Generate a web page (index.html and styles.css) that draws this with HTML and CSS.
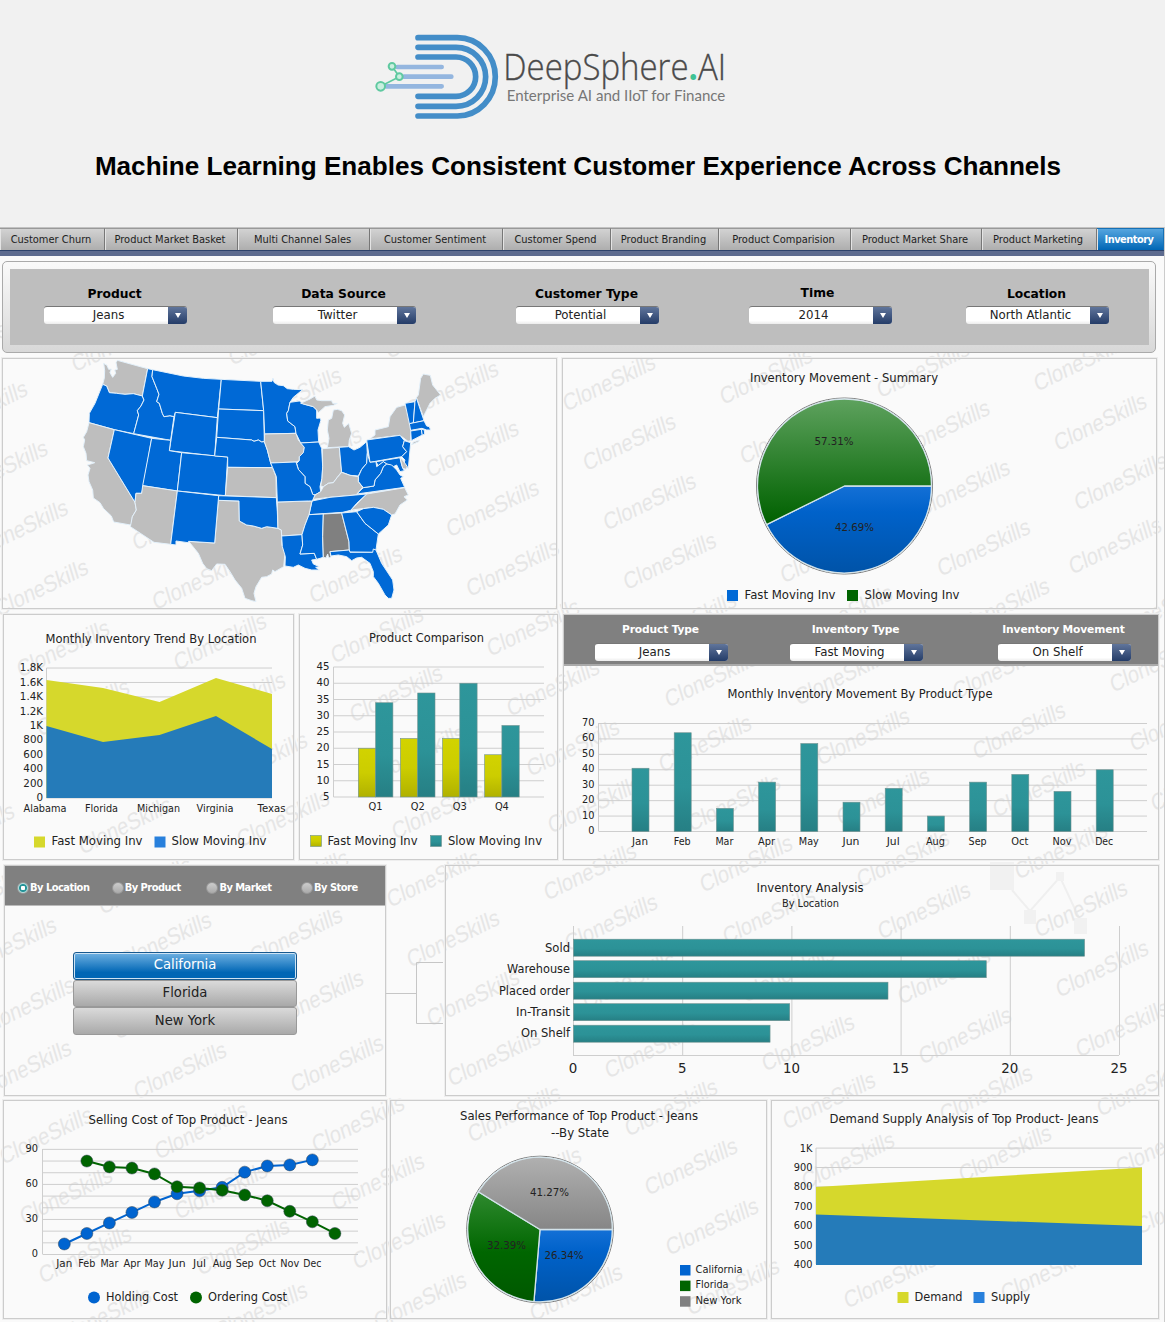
FILE: index.html
```html
<!DOCTYPE html>
<html lang="en">
<head>
<meta charset="utf-8">
<title>DeepSphere.AI - Inventory</title>
<link rel="stylesheet" href="styles.css">
</head>
<body>
<header class="masthead">
  <svg class="logo" viewBox="0 0 1140 360" role="img" aria-label="DeepSphere.AI">
    <g class="logo-arcs">
      <path d="M174 53H292A114 117.500 0 0 1 292 288H174"/>
      <path d="M174 82H288A89 88.500 0 0 1 288 259H174"/>
      <path d="M174 111H288A59 59 0 0 1 288 229H174"/>
    </g>
    <g class="logo-lines"><path d="M112 141H245M132 170H274M78 199H245"/></g>
    <path class="logo-link" d="M96 139L118 170L62 199"/>
    <g class="logo-nodes"><circle cx="96" cy="139" r="10"/><circle cx="118" cy="170" r="10"/><circle cx="62" cy="199" r="13"/></g>
    <text class="logo-name" x="430" y="180" textLength="668" lengthAdjust="spacingAndGlyphs">DeepSphere<tspan class="logo-dot">.</tspan>AI</text>
    <text class="logo-tag" x="440" y="244" textLength="656" lengthAdjust="spacingAndGlyphs">Enterprise AI and IIoT for Finance</text>
  </svg>
  <h1>Machine Learning Enables Consistent Customer Experience Across Channels</h1>
</header>
<div class="dash">
  <svg class="marks" id="marks" width="1165" height="1095" viewBox="0 227 1165 1095" aria-hidden="true"></svg>
  <nav class="tabs">
    <a>Customer Churn</a><a>Product Market Basket</a><a>Multi Channel Sales</a><a>Customer Sentiment</a><a>Customer Spend</a><a>Product Branding</a><a>Product Comparision</a><a>Product Market Share</a><a>Product Marketing</a><a class="on">Inventory</a>
  </nav>
  <section class="filters">
    <div class="filter"><b>Product</b><div class="select"><span>Jeans</span><i></i></div></div>
    <div class="filter"><b>Data Source</b><div class="select"><span>Twitter</span><i></i></div></div>
    <div class="filter"><b>Customer Type</b><div class="select"><span>Potential</span><i></i></div></div>
    <div class="filter time"><b>Time</b><div class="select"><span>2014</span><i></i></div></div>
    <div class="filter"><b>Location</b><div class="select"><span>North Atlantic</span><i></i></div></div>
  </section>
  <div class="row row-map">
    <section class="panel"><svg id="map" viewBox="3 359 553 249"></svg></section>
    <section class="panel"><svg id="summary" viewBox="563 359 593 249"></svg></section>
  </div>
  <div class="row row-mid">
    <section class="panel"><svg id="trend" viewBox="4 615 289 244"></svg></section>
    <section class="panel"><svg id="compare" viewBox="300 615 257 244"></svg></section>
    <section class="panel">
      <div class="subfilters">
        <div class="filter"><b>Product Type</b><div class="select"><span>Jeans</span><i></i></div></div>
        <div class="filter"><b>Inventory Type</b><div class="select"><span>Fast Moving</span><i></i></div></div>
        <div class="filter"><b>Inventory Movement</b><div class="select"><span>On Shelf</span><i></i></div></div>
      </div>
      <svg id="monthly" viewBox="564 666 594 193"></svg>
    </section>
  </div>
  <div class="row row-loc">
    <section class="panel picker">
      <div class="radios"><label class="on"><i></i>By Location</label><label><i></i>By Product</label><label><i></i>By Market</label><label><i></i>By Store</label></div>
      <div class="choices"><button class="on">California</button><button>Florida</button><button>New York</button></div>
    </section>
    <svg class="connector" viewBox="386 865 59 231"><path d="M386 993.500H416.500M443 962.500H416.500V1023.500H443"/></svg>
    <section class="panel"><svg id="analysis" viewBox="446 866 712 229"></svg></section>
  </div>
  <div class="row row-end">
    <section class="panel"><svg id="selling" viewBox="4 1101 382 217"></svg></section>
    <section class="panel"><svg id="sales" viewBox="391 1101 375 217"></svg></section>
    <section class="panel"><svg id="demand" viewBox="772 1101 386 217"></svg></section>
  </div>
</div>
<svg class="defs" width="0" height="0">
  <defs>
    <linearGradient id="gGreen" x1="0" y1="0" x2="0" y2="1"><stop offset="0" stop-color="#5ea25e"/><stop offset=".75" stop-color="#157015"/><stop offset="1" stop-color="#006000"/></linearGradient>
    <linearGradient id="gGreen2" x1="0" y1="0" x2="0" y2="1"><stop offset="0" stop-color="#2f8a2f"/><stop offset=".55" stop-color="#006600"/><stop offset="1" stop-color="#005800"/></linearGradient>
    <linearGradient id="gBlue" x1="0" y1="0" x2="0" y2="1"><stop offset="0" stop-color="#1470d6"/><stop offset=".3" stop-color="#0062ca"/><stop offset="1" stop-color="#0053a8"/></linearGradient>
    <linearGradient id="gGray" x1="0" y1="0" x2="0" y2="1"><stop offset="0" stop-color="#b0b0b0"/><stop offset="1" stop-color="#868686"/></linearGradient>
    <linearGradient id="gTeal" x1="0" y1="0" x2="0" y2="1"><stop offset="0" stop-color="#2e969b"/><stop offset=".55" stop-color="#2c9297"/><stop offset="1" stop-color="#267f84"/></linearGradient>
    <linearGradient id="gYellow" x1="0" y1="0" x2="0" y2="1"><stop offset="0" stop-color="#d2d300"/><stop offset=".5" stop-color="#cccd00"/><stop offset="1" stop-color="#b0b100"/></linearGradient>
  </defs>
</svg>
<script src="charts.js"></script>
</body>
</html>
```
FILE: styles.css
```css
* { box-sizing: border-box; }
body { margin: 0; background: #fafafa; font-family: "DejaVu Sans", Verdana, sans-serif; color: #222; }
.masthead { height: 227px; background: #f1f1f1; display: flex; flex-direction: column; align-items: center; padding-top: 20px; }
.logo { width: 380px; height: 120px; margin-right: 65px; }
.logo-arcs path { fill: none; stroke: #438dc8; stroke-width: 17; stroke-linecap: round; }
.logo-lines path { fill: none; stroke: #94b6df; stroke-width: 14; stroke-linecap: round; }
.logo-link { fill: none; stroke: #5fc9a0; stroke-width: 5; }
.logo-nodes circle { fill: #c9efdf; stroke: #5fc9a0; stroke-width: 6; }
.logo-name { font: 300 108px "Open Sans", sans-serif; fill: #4a4a4a; stroke: #4a4a4a; stroke-width: 1; }
.logo-dot { fill: #3fc294; stroke: none; font-weight: 700; }
.logo-tag { font: 400 45px Lato, sans-serif; fill: #777; }
h1 { margin: 10px 9px 0 0; font: bold 26.100px/32px "Liberation Sans", Arial, sans-serif; color: #000; white-space: nowrap; }

.dash { position: relative; height: 1095px; border-right: 1px solid #ccc; }
.marks { position: absolute; left: 0; top: 0; z-index: -1; }
.marks text { font: 23px "Liberation Sans", Arial, sans-serif; fill: #e6e6e6; }
.marks .deco { fill: #f1f1f1; }
.marks .deco-line { fill: none; stroke: #efefef; stroke-width: 2; }

.tabs { height: 29px; display: grid; grid-template-columns: 105px 133px 132px 133px 108px 108px 132px 131px 115px 67px; border-top: 1px solid #c2c2c2; border-bottom: 5px solid #5d6b8f; box-shadow: inset 0 -2px #2d426b; background: #ccc; }
.tabs a { height: 22px; display: flex; align-items: center; justify-content: center; border-right: 1px solid #777; border-top: 1px solid #999; box-shadow: inset 1px 0 #e4e4e4; background: linear-gradient(#d2d2d2, #aeaeae); font-size: 9.900px; white-space: nowrap; color: #222; padding-right: 2px; }
.tabs a.on { background: linear-gradient(#55a5df, #0066b5); color: #fff; font-weight: bold; font-size: 9.800px; border-color: #1670b5; padding: 0 2px 0 0; letter-spacing: -.5px; }

.filters { margin: 5px 0 0 2px; width: 1154px; height: 92px; border: 1px solid #aaa; border-radius: 5px; padding: 32px 0 0 41px; display: flex; align-items: flex-start; background: linear-gradient(#bebebe, #bebebe) 7px 7px / 1139px 76px no-repeat, linear-gradient(#fafafa, #d8d8d8); }
.filters .filter { width: 143px; }
.filters .filter:nth-child(2) { margin-left: 86px; }
.filters .filter:nth-child(3) { margin-left: 100px; }
.filters .filter:nth-child(4) { margin-left: 90px; }
.filters .filter:nth-child(5) { margin-left: 74px; }
.filter { display: flex; flex-direction: column; }
.filter b { height: 12px; line-height: 1px; text-align: center; white-space: nowrap; font-size: 12.300px; color: #000; padding-right: 2px; }
.filter.time b { position: relative; top: -1px; left: -2px; }
.select { height: 18px; display: flex; border-radius: 3px; overflow: hidden; border-top: 1px solid #777; background: linear-gradient(#fff 80%, #ececec); }
.select span { flex: 1; text-align: center; font-size: 11.800px; line-height: 16px; padding-left: 5px; }
.select i { width: 19px; background: linear-gradient(#60759b, #243c68); display: flex; align-items: center; justify-content: center; }
.select i::after { content: ""; border: 3px solid transparent; border-top: 5px solid #fff; border-bottom: 0; }

.row { display: grid; }
.panel { border: 1px solid #ccc; box-shadow: 0 0 0 1px #eee; display: flex; flex-direction: column; overflow: hidden; }
.panel > svg { display: block; width: 100%; flex: 1; min-height: 0; }
.row-map { margin: 5px 0 0 2px; height: 251px; grid-template-columns: 555px 595px; column-gap: 5px; }
.row-mid { margin: 5px 0 0 3px; height: 246px; grid-template-columns: 291px 259px 596px; column-gap: 5px; }
.row-loc { margin: 5px 0 0 4px; height: 231px; grid-template-columns: 382px 59px 714px; }
.row-end { margin: 4px 0 0 3px; height: 219px; grid-template-columns: 384px 377px 388px; column-gap: 3px; }
.row-end .panel:last-child { margin-left: 1px; margin-right: -1px; }

.subfilters { height: 51px; flex: none; background: #808080; border-bottom: 2px solid #aaa; display: flex; padding: 15px 0 0 31px; gap: 62px; }
.subfilters .filter { width: 133px; }
.subfilters .filter:nth-child(3) { margin-left: 13px; }
.subfilters b { color: #fff; font-size: 10.700px; letter-spacing: -.15px; height: 13px; line-height: 0; }

.radios { height: 40px; background: #808080; border-bottom: 1px solid #bbb; display: flex; align-items: center; padding: 4px 0 0 12px; }
.radios label { flex: none; width: 94.700px; display: flex; align-items: center; gap: 1px; color: #fff; font-weight: bold; font-size: 9.900px; letter-spacing: -.5px; white-space: nowrap; }
.radios i { width: 12px; height: 12px; border-radius: 50%; background: linear-gradient(#ccc, #aaa); border: 1px solid #989898; }
.radios .on i { background: radial-gradient(circle, #fff 0 2px, #249297 2.500px 3.500px, #b5dfdf 4.500px); }
.choices { margin: 46px 0 0 68px; width: 224px; display: flex; flex-direction: column; }
.choices button { height: 27.700px; border: 1px solid #999; border-radius: 3px; background: linear-gradient(#dadada, #a9a9a9); font: 13.200px "DejaVu Sans", sans-serif; color: #222; padding: 0 0 2px; }
.choices button.on { background: linear-gradient(#6fb1e2, #0066b5 75%); color: #fff; border-color: #17598f; box-shadow: inset 0 0 0 1px #cde3f4; }
.connector { width: 59px; height: 231px; }
.connector path { fill: none; stroke: #c6c6c6; }

svg { font-family: "DejaVu Sans", Verdana, sans-serif; }
svg text { fill: #222; }
.grid { stroke: #cecece; fill: none; }
.states path { stroke: #e4f1fb; stroke-width: 3; stroke-linejoin: round; fill: #0069d6; }
.states .g { fill: #bebebe; }
.states .d { fill: #808080; }
.slice { stroke: #d3e3ea; stroke-width: 1.300; }
.rim { fill: none; stroke: #777; }
.bar { stroke: #6f9290; stroke-width: .600; }
.defs { position: absolute; }
```
FILE: charts.js
```js
const NS = 'http://www.w3.org/2000/svg';
const get = id => document.getElementById(id);

function add(parent, tag, attrs, text) {
  const node = document.createElementNS(NS, tag);
  for (const k in attrs) node.setAttribute(k, attrs[k]);
  if (text !== undefined) node.textContent = text;
  parent.appendChild(node);
  return node;
}
// y is the vertical centre of the label; w, when given, fixes its drawn width
function label(p, x, y, s, size, anchor, w) {
  const a = { x, y: y + size * 0.36, 'font-size': size, 'text-anchor': anchor || 'middle' };
  if (w) { a.textLength = w; a.lengthAdjust = 'spacingAndGlyphs'; }
  return add(p, 'text', a, s);
}
const line = (p, x1, y1, x2, y2) => add(p, 'path', { class: 'grid', d: `M${x1} ${y1}L${x2} ${y2}` });
const rect = (p, x, y, width, height, fill, cls) => add(p, 'rect', { x, y, width, height, fill, class: cls || '' });
const poly = (p, pts, fill) => add(p, 'polygon', { points: pts.join(' '), fill });

// Background word marks, by the left end of each baseline
const marks = [];
for (let j = -1; j < 4; j++)
  for (let i = -4; i < 4; i++)
    if (!(j === 3 && i === 3)) marks.push([566 + 157 * i + 20.2 * j, 412 - 6.7 * i + 59.5 * j]);
marks.push([1072, 575]);
[[20,678],[177,671],[334,664],[490,657],[647,650],[803,643],[960,636],[1116,640],[40,737],[196,730],[353,723],[510,717],[668,708],[798,706],[956,700],[1113,693],
 [-95,803],[60,797],[218,790],[375,783],[530,777],[662,773],[820,766],[976,760],[1133,752],[-75,861],[82,855],[240,848],[395,840],[551,834],[691,832],[840,826],[996,818],[1154,812],
 [-55,922],[102,915],[259,908],[390,908],[547,901],[703,893],[860,888],[1018,880],[-33,975],[122,970],[253,965],[410,968],[568,952],[726,945],[881,940],[1038,938],
 [-15,1035],[117,1040],[274,1028],[430,1027],[586,1010],[745,1003],[901,1005],[1059,998],[-18,1098],[137,1100],[294,1093],[451,1087],[608,1079],[765,1072],[922,1065],[1079,1058],
 [3,1165],[158,1160],[315,1153],[471,1143],[628,1137],[786,1130],[943,1123],[1100,1117],[23,1225],[178,1220],[335,1211],[492,1205],[648,1196],[805,1190],[962,1183],[1119,1176],
 [42,1284],[200,1276],[356,1270],[512,1262],[669,1256],[825,1249],[982,1242],[1139,1235],[62,1345],[218,1340],[377,1330],[533,1322],[690,1316],[847,1309],[1004,1302]
].forEach(m => marks.push(m));
const bg = get('marks');
add(bg, 'path', { class: 'deco-line', d: 'M1012 890L1030 911L1060 877L1080 920' });
add(bg, 'path', { class: 'deco', d: 'M990 862h24v28h-24zM1024 910h12v14h-12zM1056 872h8v9h-8zM1074 918h13v16h-13z' });
marks.forEach(([x, y]) => add(bg, 'text', { transform: `translate(${x} ${y}) rotate(-26) skewX(-9)`, textLength: 101, lengthAdjust: 'spacingAndGlyphs' }, 'CloneSkills'));

// State outlines, three units to the pixel
const west = [
 ['g','101,40 111,46 116,58 124,57 120,68 128,82 137,70 134,60 142,58 138,38 142,31 233,56 217,138 190,131 165,133 140,130 118,128 110,108 98,103 103,84 104,62'],
 ['','98,103 110,108 118,128 140,130 165,133 190,131 217,138 222,150 213,168 202,182 206,195 191,251 133,239 57,218 58,190 75,160'],
 ['g','57,218 133,239 114,324 195,457 199,480 187,500 185,520 181,525 131,516 124,498 100,475 90,458 70,444 68,420 57,395 54,375 60,355 52,345 62,342 74,338 50,332 48,310 40,290 44,270 40,262 50,245'],
 ['','133,239 245,265 221,405 215,430 198,430 195,457 114,324'],
 ['','233,56 248,59 246,80 260,115 267,133 260,155 268,160 277,190 282,200 300,197 312,200 302,271 191,251 206,195 202,182 213,168 222,150 217,138'],
 ['','248,59 340,78 400,85 454,88 442,203 316,187 312,200 300,197 282,200 277,190 268,160 260,155 267,133 260,115 246,80'],
 ['','316,187 442,203 434,318 298,302'],
 ['','245,265 302,271 298,302 335,308 322,423 218,407'],
 ['','335,308 473,321 466,437 322,423'],
 ['g','218,407 322,423 302,583 252,577 181,530 187,500 199,480 195,457 198,430 215,430'],
 ['','454,88 572,94 581,182 446,177'],
 ['','446,177 581,182 583,275 575,276 565,270 552,274 545,270 440,262'],
 ['','440,262 545,270 552,274 565,270 575,276 583,275 592,300 602,339 608,353 473,352 473,321 434,318'],
 ['g','473,352 608,353 618,380 619,443 466,437'],
 ['g','445,451 507,453 508,513 530,525 550,528 575,535 590,530 624,535 634,540 636,585 645,610 641,650 615,665 608,660 605,672 590,680 575,682 558,710 552,730 558,755 545,752 525,745 515,715 495,690 480,665 465,643 440,642 425,662 410,656 398,640 385,610 356,574 434,579'],
 ['','446,437 619,443 622,485 624,535 590,530 575,535 550,528 530,525 508,513 507,453 445,451'],
 ['','322,423 446,437 434,579 356,574 354,578 318,573 318,585 302,583']
];
const east = [
 ['','32,94 66,94 69,85 72,97 84,105 100,107 112,116 130,118 158,119 130,142 120,157 115,182 110,190 113,213 135,230 138,250 44,252 41,182'],
 ['g','44,252 138,250 145,270 163,292 160,308 148,320 148,332 138,336 62,339 52,300 43,275'],
 ['','120,157 148,153 160,162 190,170 200,180 200,205 210,204 213,210 204,240 206,276 152,279 138,250 135,230 113,213 110,190 115,182'],
 ['g','152,160 180,147 195,138 200,150 215,152 245,152 248,160 262,160 250,166 225,170 205,188 200,180 190,170 160,162'],
 ['g','232,293 237,265 232,240 235,210 245,205 250,180 262,178 275,182 284,195 278,220 283,232 296,220 302,240 305,250 298,270 296,290'],
 ['','152,279 206,276 215,295 218,350 216,385 210,410 212,425 195,435 188,433 180,410 165,400 165,380 145,358 140,340 148,332 148,320 160,308 163,292'],
 ['g','217,296 268,292 275,365 262,382 250,398 235,400 220,410 212,408 216,385 218,350'],
 ['','268,292 296,290 312,300 330,292 350,275 352,310 350,340 335,358 325,378 300,376 285,370 275,367'],
 ['g','358,268 375,255 375,240 415,230 420,200 440,172 465,165 483,218 482,272 474,274 450,256 365,266'],
 ['','350,270 450,256 463,272 458,290 470,305 455,320 360,337'],
 ['','465,160 495,155 490,219 478,221'],
 ['g','499,143 505,135 512,85 520,72 530,74 541,76 548,105 560,120 572,135 555,145 540,160 535,170 520,200'],
 ['','495,155 499,143 522,212 490,219'],
 ['','478,221 522,212 530,228 538,230 542,240 530,240 516,235 482,241'],
 ['','482,243 514,238 517,255 484,272'],
 ['','514,238 523,240 524,252 517,256'],
 ['g','485,284 490,276 508,270 506,275'],
 ['','463,272 482,278 480,300 475,355 460,345 465,330 455,320 470,305 458,290'],
 ['','378,335 450,323 455,345 463,362 450,365 440,345 430,350 410,342 400,335 385,348'],
 ['g','450,323 458,330 472,350 468,358 458,355'],
 ['','320,432 340,413 372,408 375,390 392,370 400,350 410,342 425,345 440,360 450,375 460,380 452,385 464,412'],
 ['','352,310 360,337 378,335 380,350 400,335 410,342 400,350 392,370 375,390 372,408 340,413 325,395 325,380 335,358 350,340'],
 ['g','350,432 464,413 475,435 462,440 472,450 450,465 435,492 425,495 400,478 370,472 320,478 302,481'],
 ['g','188,448 195,435 212,425 220,410 235,400 250,398 262,382 275,367 300,376 325,380 325,395 338,412 318,435 240,442'],
 ['','186,453 240,442 350,432 320,460 302,481 278,487 177,494'],
 ['g','82,456 186,453 177,494 165,525 156,554 95,558 94,540 84,535'],
 ['','62,339 138,336 145,358 165,380 165,400 180,410 188,433 195,435 187,453 175,453 82,456 79,380 68,353'],
 ['','95,558 156,554 158,585 150,612 193,610 200,628 185,630 190,642 208,650 197,652 208,660 185,660 165,655 145,645 130,652 105,648 106,620 97,590'],
 ['','177,494 220,492 218,560 220,622 200,628 193,610 150,612 158,585 156,554 165,525'],
 ['d','220,492 275,489 297,575 298,600 240,605 243,622 236,624 233,612 228,624 220,622 218,560'],
 ['','275,489 320,485 345,520 385,552 378,600 368,607 298,606 297,575'],
 ['','320,485 340,476 370,472 400,478 425,495 415,525 385,552 345,520'],
 ['','240,605 298,600 300,607 368,607 370,597 378,600 395,640 428,690 432,720 425,745 415,745 405,735 385,700 370,680 370,665 360,640 335,622 320,624 305,632 290,620 265,615 243,618']
];
const map = get('map');
[[west, 70], [east, 250]].forEach(([list, dx]) => {
  const g = add(map, 'g', { class: 'states', transform: `translate(${dx} 350) scale(.33333)` });
  list.forEach(([c, d]) => add(g, 'path', { class: c, d: 'M' + d.replace(/ /g, 'L') + 'Z' }));
});

function pie(p, cx, cy, r, slices) {
  let a = 0;
  add(p, 'circle', { cx, cy, r: r + 1, class: 'rim' });
  slices.forEach(([v, fill]) => {
    const b = a + v / 100 * 2 * Math.PI;
    add(p, 'path', { class: 'slice', fill: `url(#${fill})`, d: `M${cx} ${cy}L${cx + r * Math.cos(a)} ${cy + r * Math.sin(a)}A${r} ${r} 0 ${v > 50 ? 1 : 0} 1 ${cx + r * Math.cos(b)} ${cy + r * Math.sin(b)}Z` });
    a = b;
  });
}

const sm = get('summary');
label(sm, 844, 377.5, 'Inventory Movement - Summary', 12, 'middle', 188);
pie(sm, 844.5, 486, 87, [[42.69, 'gBlue'], [57.31, 'gGreen']]);
label(sm, 834, 441, '57.31%', 10, 'middle', 39);
label(sm, 854.5, 527.5, '42.69%', 10, 'middle', 39);
rect(sm, 727, 590, 11, 11, '#0069d6');
label(sm, 744.5, 595, 'Fast Moving Inv', 12, 'start', 91);
rect(sm, 847, 590, 11, 11, '#006400');
label(sm, 864.5, 595, 'Slow Moving Inv', 12, 'start', 95);

const tr = get('trend');
label(tr, 151, 639, 'Monthly Inventory Trend By Location', 12, 'middle', 211);
['0', '200', '400', '600', '800', '1K', '1.2K', '1.4K', '1.6K', '1.8K'].forEach((s, i) => {
  const y = 798 - i * 14.44;
  line(tr, 46.5, y, 272, y);
  label(tr, 43, y - 0.5, s, 10.3, 'end');
});
line(tr, 46.5, 668, 46.5, 798);
poly(tr, [46.5,680, 103,688, 159.5,702, 216,678, 272,694, 272,798, 46.5,798], '#d6d82c');
poly(tr, [46.5,726, 103,742, 159.5,735, 216,716, 272,749, 272,798, 46.5,798], '#257bb9');
[['Alabama', 45, 43], ['Florida', 101.5, 33], ['Michigan', 158.5, 43], ['Virginia', 215, 37], ['Texas', 271.5, 28]].forEach(([s, x, w]) => label(tr, x, 808, s, 10.4, 'middle', w));
rect(tr, 34, 836.5, 11, 11, '#d6d82c');
label(tr, 51.5, 841, 'Fast Moving Inv', 12, 'start', 91);
rect(tr, 154.500, 836.5, 11, 11, '#2880dc');
label(tr, 171.5, 841, 'Slow Moving Inv', 12, 'start', 95);

const cp = get('compare');
label(cp, 426.5, 638, 'Product Comparison', 12, 'middle', 115);
for (let v = 5; v <= 45; v += 5) {
  const y = 797 - (v - 5) * 3.25;
  line(cp, 333.5, y, 544, y);
  label(cp, 329.5, y - 0.5, v, 10.2, 'end');
}
line(cp, 333.5, 667, 333.5, 797);
[[20, 34], [23, 37], [23, 40], [18, 27]].forEach(([a, b], i) => {
  const x = 358.3 + i * 42.1;
  rect(cp, x, 797 - (a - 5) * 3.25, 17.3, (a - 5) * 3.25, 'url(#gYellow)', 'bar');
  rect(cp, x + 17.3, 797 - (b - 5) * 3.25, 17.3, (b - 5) * 3.25, 'url(#gTeal)', 'bar');
  label(cp, x + 17.3, 806.5, 'Q' + (i + 1), 10.2, 'middle', 14);
});
rect(cp, 310.5, 835.5, 11, 11, 'url(#gYellow)', 'bar');
label(cp, 327.5, 840.5, 'Fast Moving Inv', 12, 'start', 90);
rect(cp, 430.5, 835.5, 11, 11, 'url(#gTeal)', 'bar');
label(cp, 448, 840.5, 'Slow Moving Inv', 12, 'start', 94);

const mo = get('monthly');
const months = ['Jan', 'Feb', 'Mar', 'Apr', 'May', 'Jun', 'Jul', 'Aug', 'Sep', 'Oct', 'Nov', 'Dec'];
const monthWidths = [16, 17, 18, 17, 20, 17, 13, 19, 18, 17, 19, 18];
label(mo, 860, 693.5, 'Monthly Inventory Movement By Product Type', 12, 'middle', 265);
for (let v = 0; v <= 70; v += 10) {
  const y = 831.5 - v * 1.543;
  line(mo, 598.5, y, 1147, y);
  label(mo, 594.5, y - 1, v, 9.8, 'end');
}
line(mo, 598.5, 723, 598.5, 831);
[41, 64, 15, 32, 57, 19, 28, 10, 32, 37, 26, 40].forEach((v, i) => {
  const x = 640.5 + i * 42.2;
  rect(mo, x - 8.5, 831.5 - v * 1.543, 17, v * 1.543, 'url(#gTeal)', 'bar');
  label(mo, x - 0.5, 841, months[i], 10.2, 'middle', monthWidths[i]);
});

const an = get('analysis');
label(an, 810, 888, 'Inventory Analysis', 12, 'middle', 107);
label(an, 810.5, 903.5, 'By Location', 10, 'middle', 57);
for (let i = 0; i <= 5; i++) {
  const x = 573.5 + i * 109.2;
  line(an, x, 926, x, 1055);
  label(an, x - 0.5, 1068, i * 5, 13.4);
}
line(an, 573, 1055.5, 1119, 1055.5);
[['Sold', 23.4], ['Warehouse', 18.9], ['Placed order', 14.4], ['In-Transit', 9.9], ['On Shelf', 9]].forEach(([s, v], i) => {
  rect(an, 573.5, 939.2 + i * 21.5, v * 21.84, 17, 'url(#gTeal)', 'bar');
  label(an, 570, 947.5 + i * 21.4, s, 12, 'end', [25, 63, 71, 54, 49][i]);
});

const se = get('selling');
label(se, 188, 1120, 'Selling Cost of Top Product - Jeans', 12, 'middle', 199);
for (let v = 0; v <= 90; v += 10) {
  const y = 1254.5 - v * 1.168;
  line(se, 42.5, y, 358, y);
  if (v % 30 === 0) label(se, 38, y - 1, v, 9.8, 'end');
}
line(se, 42.5, 1149, 42.5, 1254);
[[[9, 18, 27, 36, 45, 52, 54.5, 57.5, 70.5, 75.8, 76.7, 81], 0, '#0064d0'], [[80, 75, 74, 69, 58, 57, 55, 51, 46, 37, 28, 18], 1, '#006400']].forEach(([vals, off, c]) => {
  const pts = vals.map((v, i) => [64.3 + (i + off) * 22.55, 1254.5 - v * 1.168]);
  add(se, 'polyline', { points: pts.join(' '), fill: 'none', stroke: c, 'stroke-width': 2 });
  pts.forEach(([cx, cy]) => add(se, 'circle', { cx, cy, r: 6, fill: c, stroke: '#345', 'stroke-width': 0.5 }));
});
months.forEach((m, i) => label(se, 64.3 + i * 22.55, 1263.5, m, 10.2, 'middle', monthWidths[i]));
add(se, 'circle', { cx: 94, cy: 1297.500, r: 6, fill: '#0064d0' });
label(se, 106, 1297, 'Holding Cost', 12, 'start', 72);
add(se, 'circle', { cx: 196, cy: 1297.500, r: 6, fill: '#006400' });
label(se, 208, 1297, 'Ordering Cost', 12, 'start', 79);

const sa = get('sales');
label(sa, 579, 1116, 'Sales Performance of Top Product - Jeans', 12, 'middle', 238);
label(sa, 580, 1133, '--By State', 12, 'middle', 58);
pie(sa, 540, 1229.5, 72.3, [[26.34, 'gBlue'], [32.39, 'gGreen2'], [41.27, 'gGray']]);
label(sa, 549.5, 1192.5, '41.27%', 10, 'middle', 39);
label(sa, 506.5, 1245, '32.39%', 10, 'middle', 39);
label(sa, 564, 1255.5, '26.34%', 10, 'middle', 39);
[['California', '#0064d0', 47], ['Florida', '#006400', 33], ['New York', '#808080', 46]].forEach(([s, c, w], i) => {
  rect(sa, 680, 1265 + i * 15.6, 10.5, 10.5, c);
  label(sa, 695.5, 1269 + i * 15.6, s, 10.2, 'start', w);
});

const de = get('demand');
label(de, 964, 1118.5, 'Demand Supply Analysis of Top Product- Jeans', 12, 'middle', 269);
['400', '500', '600', '700', '800', '900', '1K'].forEach((s, i) => {
  const y = 1264.5 - i * 19.4;
  line(de, 816, y, 1142, y);
  label(de, 812.5, y, s, 9.8, 'end');
});
line(de, 816, 1148, 816, 1264);
poly(de, [816,1187, 1142,1167.5, 1142,1265, 816,1265], '#d6d82c');
poly(de, [816,1214.500, 1142,1226, 1142,1265, 816,1265], '#257bb9');
rect(de, 897.5, 1292, 11, 11, '#d6d82c');
label(de, 914.5, 1297, 'Demand', 12, 'start', 48);
rect(de, 973.5, 1292, 11, 11, '#2880dc');
label(de, 991, 1297, 'Supply', 12, 'start', 39);
```
